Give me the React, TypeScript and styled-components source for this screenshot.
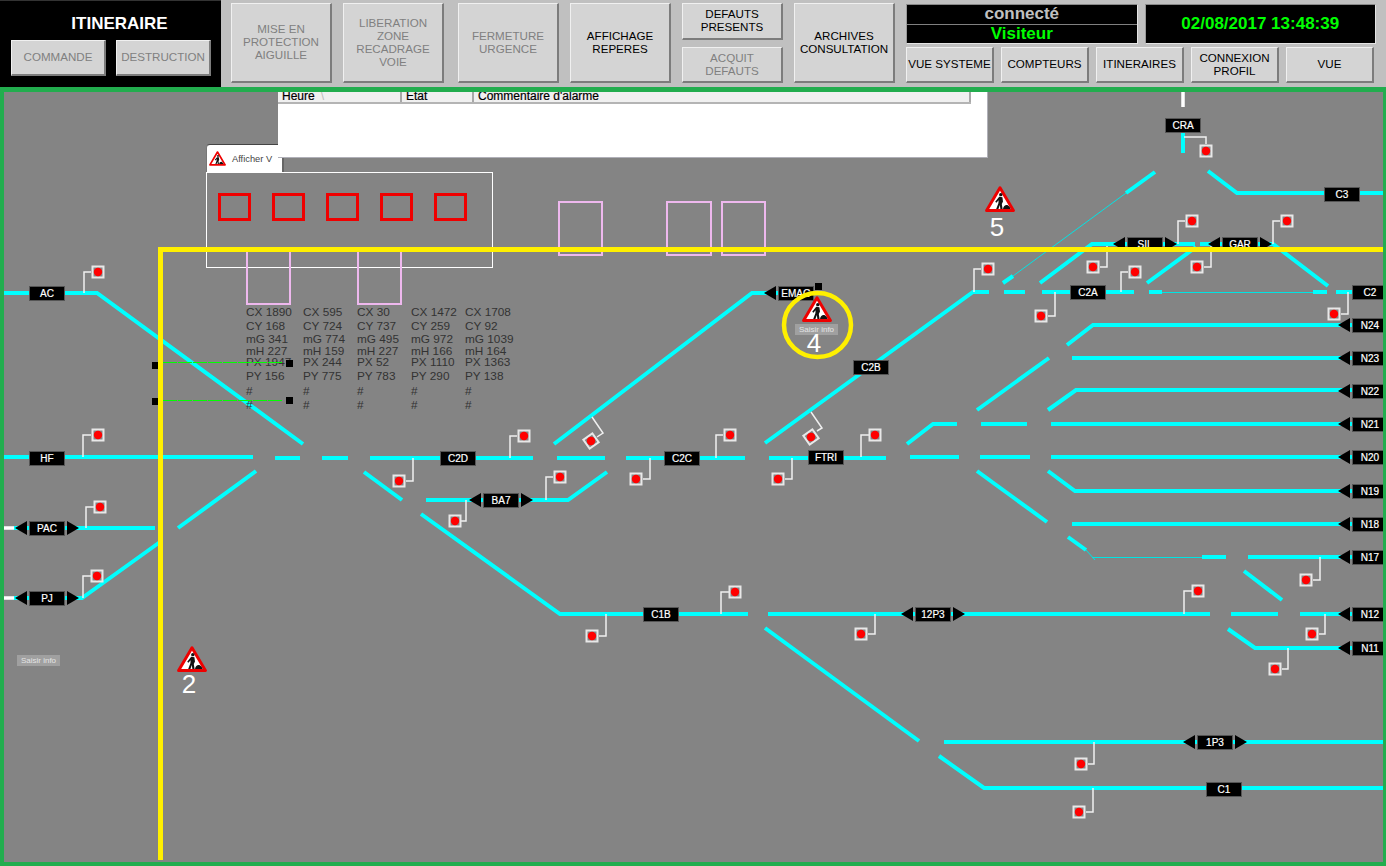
import React from "react";
import styled, { createGlobalStyle } from "styled-components";

const FONT = `"Liberation Sans", Arial, sans-serif`;
const ORIGIN_X = 4;
const ORIGIN_Y = 92;

const GlobalStyle = createGlobalStyle`
  html, body { margin: 0; padding: 0; background: #c0c0c0; }
  body { font-family: ${FONT}; overflow: hidden; }
  #root { width: 1386px; height: 866px; }
`;

const Page = styled.div`
  width: 1386px;
  height: 866px;
  display: flex;
  flex-direction: column;
  background: #c0c0c0;
`;

const TopBar = styled.header`
  height: 87px;
  display: flex;
  flex: none;
`;

const CommandPanel = styled.section`
  width: 221px;
  background: #000;
  display: flex;
  flex-direction: column;
  padding: 14px 11px 11px;
  box-sizing: border-box;
  gap: 7px;
  border-top: 1px solid #333;
`;

const PanelTitle = styled.h1`
  margin: 0;
  padding-left: 18px;
  font: 700 17px/18px ${FONT};
  color: #fff;
  text-align: center;
`;

const PanelButtons = styled.div`
  display: flex;
  gap: 10px;
`;

const Controls = styled.div`
  display: flex;
  gap: 11px;
  padding: 3px 0 4px 10px;
`;

const ControlStack = styled.div`
  display: flex;
  flex-direction: column;
  gap: 7px;
`;

const Button = styled.button<{ $w: number; $h?: number; $muted?: boolean; $push?: number }>`
  width: ${(p) => p.$w}px;
  height: ${(p) => (p.$h ? `${p.$h}px` : "100%")};
  margin: 0 0 0 ${(p) => p.$push ?? 0}px;
  padding: 0 0 2px;
  flex: none;
  box-sizing: border-box;
  background: #d4d4d4;
  border: 1px solid #d4d4d4;
  border-top-color: #f0f0f0;
  border-left-color: #f0f0f0;
  border-right: 2px solid #7c7c7c;
  border-bottom: 2px solid #7c7c7c;
  color: ${(p) => (p.$muted ? "#808080" : "#000")};
  font: 400 11.6px/13px ${FONT};
  text-align: center;
  white-space: nowrap;
`;

const StatusArea = styled.div`
  display: flex;
  flex-direction: column;
  gap: 3px;
  margin-top: 1px;
  width: 470px;
`;

const StatusRow = styled.div`
  display: flex;
  gap: 7px;
`;

const Readout = styled.div`
  height: 40px;
  box-sizing: border-box;
  background: #000;
  border: 1px solid #e4e4e4;
  border-top-color: #888;
  border-left-color: #999;
  flex: 1;
  display: flex;
  flex-direction: column;
  align-items: center;
  justify-content: center;
`;

const ReadoutLine = styled.div<{ $green?: boolean; $rule?: boolean }>`
  flex: 1;
  width: 100%;
  text-align: center;
  font: 700 17px/18px ${FONT};
  color: ${(p) => (p.$green ? "#00ff00" : "#c0c0c0")};
  ${(p) => (p.$rule ? "border-bottom: 1px solid #808080;" : "")}
`;

const Clock = styled.div`
  font: 700 17px/20px ${FONT};
  color: #00ff00;
`;

const NavRow = styled.nav`
  display: flex;
  gap: 7px;
`;

const Canvas = styled.main`
  position: relative;
  flex: 1;
  overflow: hidden;
  background: #848484;
  border-style: solid;
  border-color: #22ad4e;
  border-width: 5px 3px 4px 4px;
`;

const Layer = styled.svg`
  position: absolute;
  left: 0;
  top: 0;
  width: 1379px;
  height: 770px;
  pointer-events: none;
`;

const AlarmTable = styled.section`
  position: absolute;
  left: ${278 - ORIGIN_X}px;
  top: -8px;
  width: 710px;
  height: 74px;
  background: #fff;
  border-right: 1px solid #b0b0b8;
  border-bottom: 1px solid #b0b0b8;
  box-sizing: border-box;
`;

const TableHead = styled.div`
  display: grid;
  grid-template-columns: 124px 72px 497px;
  height: 18px;
  background: #f0f0f0;
  width: 693px;
  border-bottom: 2px solid #b4b4b4;
  box-sizing: content-box;
`;

const HeadCell = styled.div`
  font: 400 12px/14px ${FONT};
  color: #000;
  padding: 5px 0 0 4px;
  border-right: 2px solid #a8a8a8;
  box-sizing: border-box;
  height: 18px;
  overflow: hidden;
  white-space: nowrap;
  -webkit-text-stroke: 0.2px #000;
`;

const SortMark = styled.span`
  color: #bcbcbc;
  margin-left: 6px;
  -webkit-text-stroke: 0;
`;

const Tab = styled.div`
  position: absolute;
  left: ${206 - ORIGIN_X}px;
  top: ${144 - ORIGIN_Y}px;
  width: 78px;
  height: 29px;
  box-sizing: border-box;
  background: #fff;
  border-top: 1px solid #444;
  border-left: 1px solid #777;
  border-right: 2px solid #666;
  border-bottom: 1px solid #777;
  border-radius: 4px 4px 0 0;
  display: flex;
  align-items: center;
  gap: 6px;
  padding-left: 2px;
  font: 400 9.3px/12px ${FONT};
  color: #444;
`;

const StatGrid = styled.div`
  position: absolute;
  left: ${246 - ORIGIN_X}px;
  top: ${307 - ORIGIN_Y}px;
  display: grid;
  grid-auto-flow: column;
  grid-template-columns: 57px 54px 54px 54px 54px;
  grid-template-rows: 14px 13px 12px 11px 14px 15px 14px 14px;
  font: 400 11.8px/11px ${FONT};
  color: #333;
  white-space: nowrap;
`;

const TrackTag = styled.div<{ $x: number; $y: number; $l?: boolean; $r?: boolean }>`
  position: absolute;
  left: ${(p) => p.$x - 18 - (p.$l ? 14 : 0) - ORIGIN_X}px;
  top: ${(p) => p.$y - 7 - ORIGIN_Y}px;
  display: flex;
  gap: 2px;
  height: 15px;
`;

const TagBody = styled.div`
  width: 36px;
  height: 15px;
  background: #000;
  color: #fff;
  font: 400 10px/15px ${FONT};
  text-align: center;
  box-shadow: 0 0 0 1px #555 inset;
  -webkit-text-stroke: 0.2px #fff;
`;

const TagArrow = styled.span<{ $dir: "l" | "r" }>`
  width: 0;
  height: 0;
  border-top: 7.5px solid transparent;
  border-bottom: 7.5px solid transparent;
  ${(p) => (p.$dir === "l" ? "border-right: 12px solid #000;" : "border-left: 12px solid #000;")}
`;

const InfoChip = styled.div<{ $x: number; $y: number }>`
  position: absolute;
  left: ${(p) => p.$x - ORIGIN_X}px;
  top: ${(p) => p.$y - ORIGIN_Y}px;
  width: 43px;
  height: 11px;
  background: #a0a0a0;
  color: #e4e4e4;
  font: 400 8px/11px ${FONT};
  text-align: center;
  white-space: nowrap;
`;

const WorkSign = styled.svg<{ $x?: number; $y?: number; $pos?: boolean }>`
  flex: none;
  display: block;
  ${(p) =>
    p.$pos
      ? `position: absolute; left: ${(p.$x ?? 0) - ORIGIN_X}px; top: ${(p.$y ?? 0) - ORIGIN_Y}px;`
      : ""}
`;

const ZoneNumber = styled.div<{ $x: number; $y: number }>`
  position: absolute;
  left: ${(p) => p.$x - ORIGIN_X}px;
  top: ${(p) => p.$y - ORIGIN_Y}px;
  width: 20px;
  text-align: center;
  color: #fff;
  font: 400 26px/26px ${FONT};
`;

const TRACKS = [
  "M4,293H97L303,444",
  "M4,457H253",
  "M275,458H300",
  "M322,458H348",
  "M370,458H533",
  "M178,528L256,471",
  "M14,528H155",
  "M14,598H82L160,542",
  "M364,472L402,500",
  "M426,500H568L607,472",
  "M421,514L560,614H748",
  "M768,614H1210",
  "M1231,614H1278",
  "M1300,614H1383",
  "M554,444L752,293H780",
  "M557,458H605",
  "M626,458H745",
  "M769,458H886",
  "M765,443L973,292H989",
  "M1004,292H1025",
  "M1042,292H1134",
  "M1149,292H1162",
  "M1313,292H1327",
  "M1336,292H1360",
  "M1003,283L1013,276",
  "M1126,193L1155,172",
  "M1183,130V153",
  "M1208,171L1237,193H1383",
  "M1040,283L1092,244H1130",
  "M1160,244H1195",
  "M1200,244H1230",
  "M1250,244H1273L1328,286",
  "M1147,283L1196,247",
  "M1067,345L1093,325H1383",
  "M1072,358H1383",
  "M977,410L1049,358",
  "M1048,410L1076,390H1383",
  "M907,444L933,424H957",
  "M981,424H1027",
  "M1051,424H1383",
  "M910,457H959",
  "M980,457H1030",
  "M1051,457H1383",
  "M977,471L1047,522",
  "M1048,471L1075,491H1383",
  "M1072,524H1383",
  "M1068,537L1086,550",
  "M1202,557H1226",
  "M1248,557H1383",
  "M1244,571L1282,600",
  "M1228,629L1255,648H1383",
  "M765,628L919,741",
  "M944,742H1383",
  "M939,756L984,788H1383",
];

const THIN = [
  "M1013,276L1126,193",
  "M1162,292.5H1313",
  "M1086,550L1095,560",
  "M1092,557.5H1202",
];

type Sig = { x: number; y: number; d: string; rot?: boolean };

const SIGNALS: Sig[] = [
  { x: 98, y: 272, d: "M84,293V272H91" },
  { x: 98, y: 435, d: "M83,457V435H91" },
  { x: 100, y: 507, d: "M86,528V507H94" },
  { x: 97, y: 576, d: "M83,598V576H91" },
  { x: 524, y: 436, d: "M510,458V436H517" },
  { x: 399, y: 481, d: "M413,458V481H406" },
  { x: 560, y: 477, d: "M546,500V477H553" },
  { x: 455, y: 521, d: "M466,500V521H461" },
  { x: 591, y: 441, d: "M592,417L603,433L597,437", rot: true },
  { x: 811, y: 437, d: "M811,412L822,428L817,431", rot: true },
  { x: 730, y: 435, d: "M716,458V435H723" },
  { x: 636, y: 479, d: "M650,458V479H643" },
  { x: 875, y: 435, d: "M861,457V435H869" },
  { x: 778, y: 479, d: "M792,458V479H785" },
  { x: 735, y: 592, d: "M721,614V592H729" },
  { x: 592, y: 636, d: "M606,614V636H599" },
  { x: 861, y: 634, d: "M875,614V634H868" },
  { x: 1198, y: 591, d: "M1184,614V591H1192" },
  { x: 1306, y: 580, d: "M1320,557V580H1313" },
  { x: 1312, y: 634, d: "M1325,614V634H1319" },
  { x: 1275, y: 669, d: "M1288,648V669H1282" },
  { x: 1081, y: 764, d: "M1094,742V764H1088" },
  { x: 1079, y: 812, d: "M1093,788V812H1086" },
  { x: 1206, y: 151, d: "M1184,137H1206V144" },
  { x: 1192, y: 221, d: "M1178,244V221H1185" },
  { x: 1287, y: 221, d: "M1273,244V221H1280" },
  { x: 1093, y: 267, d: "M1107,246V267H1100" },
  { x: 1197, y: 267, d: "M1211,246V267H1204" },
  { x: 1135, y: 272, d: "M1121,292V272H1128" },
  { x: 988, y: 269, d: "M974,292V269H981" },
  { x: 1041, y: 316, d: "M1055,292V316H1048" },
  { x: 1334, y: 314, d: "M1348,292V314H1341" },
];

type Tag = { t: string; x: number; y: number; l?: boolean; r?: boolean };

const TAGS: Tag[] = [
  { t: "AC", x: 47, y: 293 },
  { t: "HF", x: 47, y: 458 },
  { t: "PAC", x: 47, y: 528, l: true, r: true },
  { t: "PJ", x: 47, y: 598, l: true, r: true },
  { t: "C2D", x: 458, y: 458 },
  { t: "BA7", x: 501, y: 500, l: true, r: true },
  { t: "C2C", x: 682, y: 458 },
  { t: "FTRI", x: 826, y: 457 },
  { t: "C1B", x: 661, y: 614 },
  { t: "12P3", x: 933, y: 614, l: true, r: true },
  { t: "EMAG", x: 796, y: 293, l: true },
  { t: "C2B", x: 871, y: 367 },
  { t: "C2A", x: 1088, y: 292 },
  { t: "C3", x: 1342, y: 194 },
  { t: "CRA", x: 1183, y: 125 },
  { t: "SIL", x: 1145, y: 244, l: true, r: true },
  { t: "GAR", x: 1240, y: 244, l: true, r: true },
  { t: "C2", x: 1370, y: 292 },
  { t: "N24", x: 1370, y: 325, l: true },
  { t: "N23", x: 1370, y: 358, l: true },
  { t: "N22", x: 1370, y: 391, l: true },
  { t: "N21", x: 1370, y: 424, l: true },
  { t: "N20", x: 1370, y: 457, l: true },
  { t: "N19", x: 1370, y: 491, l: true },
  { t: "N18", x: 1370, y: 524, l: true },
  { t: "N17", x: 1370, y: 557, l: true },
  { t: "N12", x: 1370, y: 614, l: true },
  { t: "N11", x: 1370, y: 648, l: true },
  { t: "1P3", x: 1215, y: 742, l: true, r: true },
  { t: "C1", x: 1224, y: 789 },
];

const STATS = [
  ["CX 1890", "CY 168", "mG 341", "mH 227", "PX 1947", "PY 156", "#", "#"],
  ["CX 595", "CY 724", "mG 774", "mH 159", "PX 244", "PY 775", "#", "#"],
  ["CX 30", "CY 737", "mG 495", "mH 227", "PX 52", "PY 783", "#", "#"],
  ["CX 1472", "CY 259", "mG 972", "mH 166", "PX 1110", "PY 290", "#", "#"],
  ["CX 1708", "CY 92", "mG 1039", "mH 164", "PX 1363", "PY 138", "#", "#"],
];

const RED_BOXES = [218, 272, 326, 380, 434];
const PINK_BOXES = [
  { x: 247, y: 250, w: 43, h: 54 },
  { x: 358, y: 250, w: 43, h: 54 },
  { x: 559, y: 202, w: 43, h: 53 },
  { x: 667, y: 202, w: 44, h: 53 },
  { x: 722, y: 202, w: 43, h: 53 },
];
const BLACK_DOTS = [
  [152, 362],
  [286, 360],
  [152, 398],
  [286, 397],
  [815, 283],
];

function Sign({ w, x, y }: { w: number; x?: number; y?: number }) {
  const positioned = x !== undefined;
  return (
    <WorkSign
      $pos={positioned}
      $x={x}
      $y={y}
      width={w}
      height={w * 0.87}
      viewBox="0 0 30 26"
    >
      <path d="M15 1.8L28.4 24.4H1.6Z" fill="#fff" stroke="#ee0000" strokeWidth="3" strokeLinejoin="round" />
      <circle cx="15.8" cy="8.6" r="1.7" fill="#111" />
      <path d="M14.2 10.8L17.4 11.2L18 15.4L16.8 18L17.6 23H15.4L14.8 19L13.4 23H11.2L13.4 17.2L13.6 14.2L11.4 16.8L10.2 15.6Z" fill="#111" />
      <path d="M18 23C18.4 19.6 21 18.2 22.8 19.2C24.2 20 25.2 21.4 25.6 23Z" fill="#111" />
    </WorkSign>
  );
}

export default function App() {
  return (
    <Page>
      <GlobalStyle />
      <TopBar>
        <CommandPanel>
          <PanelTitle>ITINERAIRE</PanelTitle>
          <PanelButtons>
            <Button $w={95} $h={36} $muted>COMMANDE</Button>
            <Button $w={95} $h={36} $muted>DESTRUCTION</Button>
          </PanelButtons>
        </CommandPanel>
        <Controls>
          <Button $w={101} $muted>MISE EN<br />PROTECTION<br />AIGUILLE</Button>
          <Button $w={101} $muted>LIBERATION<br />ZONE<br />RECADRAGE<br />VOIE</Button>
          <Button $w={101} $muted $push={3}>FERMETURE<br />URGENCE</Button>
          <Button $w={101}>AFFICHAGE<br />REPERES</Button>
          <ControlStack>
            <Button $w={101} $h={37}>DEFAUTS<br />PRESENTS</Button>
            <Button $w={101} $h={36} $muted>ACQUIT<br />DEFAUTS</Button>
          </ControlStack>
          <Button $w={101}>ARCHIVES<br />CONSULTATION</Button>
          <StatusArea>
            <StatusRow>
              <Readout>
                <ReadoutLine $rule>connecté</ReadoutLine>
                <ReadoutLine $green>Visiteur</ReadoutLine>
              </Readout>
              <Readout>
                <Clock>02/08/2017 13:48:39</Clock>
              </Readout>
            </StatusRow>
            <NavRow>
              <Button $w={88} $h={36}>VUE SYSTEME</Button>
              <Button $w={88} $h={36}>COMPTEURS</Button>
              <Button $w={88} $h={36}>ITINERAIRES</Button>
              <Button $w={88} $h={36}>CONNEXION<br />PROFIL</Button>
              <Button $w={88} $h={36}>VUE</Button>
            </NavRow>
          </StatusArea>
        </Controls>
      </TopBar>

      <Canvas>
        <Layer viewBox={`${ORIGIN_X} ${ORIGIN_Y} 1379 770`}>
          <g fill="none" stroke="#fff" strokeWidth="3.5">
            <path d="M4,528H14M4,598H14M1183,92V107" />
          </g>
          <g fill="none" stroke="#00ffff" strokeWidth="4">
            {TRACKS.map((d) => (
              <path key={d} d={d} />
            ))}
          </g>
          <g fill="none" stroke="#00e4e4" strokeWidth="1">
            {THIN.map((d) => (
              <path key={d} d={d} />
            ))}
          </g>
          {SIGNALS.map((s) => (
            <g key={s.d}>
              <path d={s.d} fill="none" stroke="#f0f0f0" strokeWidth="1.5" />
              <g transform={s.rot ? `rotate(-35 ${s.x} ${s.y})` : undefined}>
                <rect x={s.x - 5.5} y={s.y - 5.5} width="11" height="11" fill="#848484" stroke="#e8e8e8" strokeWidth="2" />
                <circle cx={s.x} cy={s.y} r="4.2" fill="#ff0000" />
              </g>
            </g>
          ))}
        </Layer>

        <StatGrid>
          {STATS.flat().map((line, i) => (
            <div key={i}>{line}</div>
          ))}
        </StatGrid>

        {TAGS.map((tag) => (
          <TrackTag key={tag.t} $x={tag.x} $y={tag.y} $l={tag.l} $r={tag.r}>
            {tag.l && <TagArrow $dir="l" />}
            <TagBody>{tag.t}</TagBody>
            {tag.r && <TagArrow $dir="r" />}
          </TrackTag>
        ))}

        <Tab>
          <Sign w={17} />
          Afficher V
        </Tab>

        <AlarmTable>
          <TableHead>
            <HeadCell>
              Heure<SortMark>\</SortMark>
            </HeadCell>
            <HeadCell>Etat</HeadCell>
            <HeadCell>Commentaire d'alarme</HeadCell>
          </TableHead>
        </AlarmTable>

        <Layer viewBox={`${ORIGIN_X} ${ORIGIN_Y} 1379 770`}>
          <rect x="206.5" y="172.5" width="286" height="95" fill="none" stroke="#fff" strokeWidth="1" />
          {RED_BOXES.map((x) => (
            <rect key={x} x={x + 1.5} y="194.5" width="30" height="25" fill="none" stroke="#f00000" strokeWidth="3" />
          ))}
          {PINK_BOXES.map((b) => (
            <rect key={b.x} x={b.x} y={b.y} width={b.w} height={b.h} fill="none" stroke="#eeb8ee" strokeWidth="2" />
          ))}
          <path d="M163,362.5H283M163,400.5H283" stroke="#00ff00" strokeWidth="1" strokeDasharray="14 1" fill="none" />
          {BLACK_DOTS.map(([x, y]) => (
            <rect key={`${x}-${y}`} x={x} y={y} width="7" height="7" fill="#000" />
          ))}
          <path d="M160.5,860V249.5H1383" fill="none" stroke="#fff000" strokeWidth="5" />
          <ellipse cx="817.5" cy="325" rx="33.5" ry="32" fill="none" stroke="#fff000" strokeWidth="4.5" />
        </Layer>

        <Sign w={30} x={985} y={186} />
        <ZoneNumber $x={987} $y={214}>5</ZoneNumber>
        <Sign w={30} x={802} y={296} />
        <InfoChip $x={795} $y={324}>Saisir info</InfoChip>
        <ZoneNumber $x={804} $y={330}>4</ZoneNumber>
        <Sign w={30} x={177} y={646} />
        <ZoneNumber $x={179} $y={671}>2</ZoneNumber>
        <InfoChip $x={17} $y={655}>Saisir info</InfoChip>
      </Canvas>
    </Page>
  );
}
